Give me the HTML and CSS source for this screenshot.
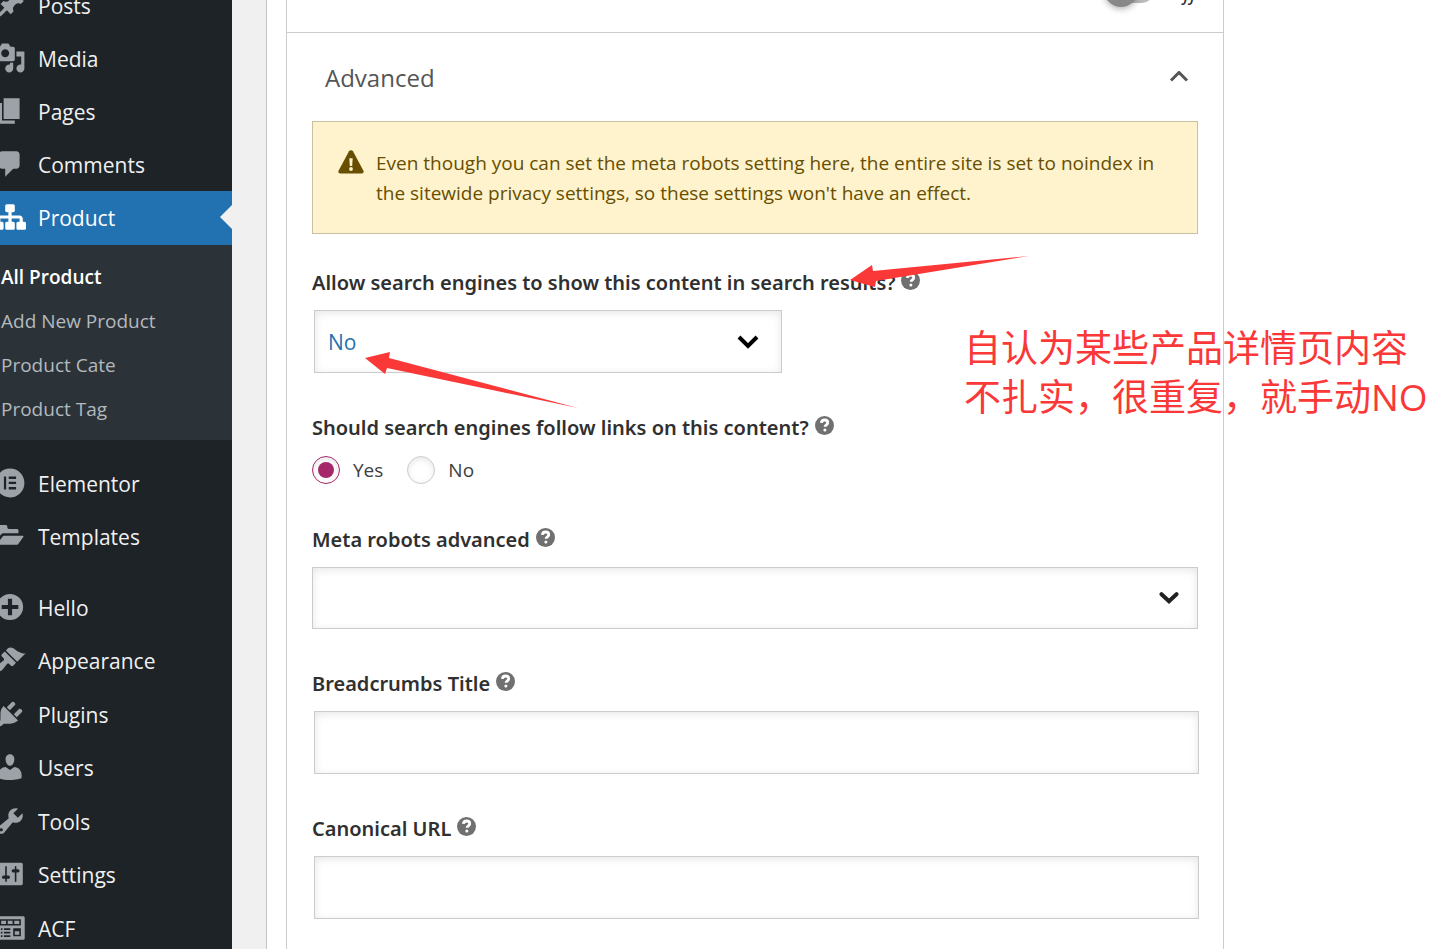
FILE: index.html
```html
<!DOCTYPE html>
<html lang="en">
<head>
  <meta charset="UTF-8" />
  <meta name="viewport" content="width=device-width, initial-scale=1.0" />
  <title>Edit Product</title>
  <link rel="stylesheet" href="styles.css">
</head>
<body>
  <div class="admin">
    <nav class="sidebar">
      <ul class="menu">
        <li><a href="#"><svg class="menu-icon" viewBox="0 0 20 20"><path d="M10.44 3.02l1.82-1.82 6.36 6.35-1.83 1.82c-1.05-.68-2.48-.57-3.41.36l-.75.75c-.92.93-1.04 2.35-.35 3.41l-1.83 1.82-2.41-2.41-2.8 2.79c-.42.42-3.38 2.71-3.8 2.29s1.86-3.39 2.28-3.81l2.79-2.79L4.1 9.36l1.83-1.82c1.05.69 2.48.57 3.4-.36l.75-.75c.93-.92 1.05-2.35.36-3.41z"/></svg>Posts</a></li>
        <li><a href="#"><svg class="menu-icon" viewBox="0 0 20 20"><path d="M13 11V4c0-.55-.45-1-1-1h-1.67L9 1H5L3.67 3H2c-.55 0-1 .45-1 1v7c0 .55.45 1 1 1h10c.55 0 1-.45 1-1zM7 4.5c1.38 0 2.5 1.12 2.5 2.5S8.38 9.5 7 9.5 4.5 8.38 4.5 7 5.62 4.5 7 4.5zM14 6h5v10.5c0 1.38-1.12 2.5-2.5 2.5S14 17.88 14 16.5s1.12-2.5 2.5-2.5c.17 0 .34.02.5.05V9h-3V6zm-4 8.05V13h2v3.5c0 1.38-1.12 2.5-2.5 2.5S7 17.88 7 16.5 8.12 14 9.5 14c.17 0 .34.02.5.05z"/></svg>Media</a></li>
        <li><a href="#"><svg class="menu-icon" viewBox="0 0 20 20"><path d="M6 15V2h10v13H6zm-1 1h8v2H3V5h2v11z"/></svg>Pages</a></li>
        <li><a href="#"><svg class="menu-icon" viewBox="0 0 20 20"><path d="M5 2h9c1.1 0 2 .9 2 2v7c0 1.1-.9 2-2 2h-2l-5 5v-5H5c-1.1 0-2-.9-2-2V4c0-1.1.9-2 2-2z"/></svg>Comments</a></li>
      </ul>

      <a class="current" href="#"><svg class="menu-icon" viewBox="0 0 20 20"><path d="M18 13h1c.55 0 1 .45 1 1.01v2.98c0 .56-.45 1.01-1 1.01h-4c-.55 0-1-.45-1-1.01v-2.98c0-.56.45-1.01 1-1.01h1v-2h-5v2h1c.55 0 1 .45 1 1.01v2.98c0 .56-.45 1.01-1 1.01H8c-.55 0-1-.45-1-1.01v-2.98c0-.56.45-1.01 1-1.01h1v-2H4v2h1c.55 0 1 .45 1 1.01v2.98C6 17.55 5.55 18 5 18H1c-.55 0-1-.45-1-1.01v-2.98C0 13.45.45 13 1 13h1v-2c0-1.1.9-2 2-2h5V7H8c-.55 0-1-.45-1-1.01V3.01C7 2.45 7.45 2 8 2h4c.55 0 1 .45 1 1.01v2.98C13 6.55 12.55 7 12 7h-1v2h5c1.1 0 2 .9 2 2v2z"/></svg>Product</a>
      <ul class="submenu">
        <li><a class="active" href="#">All Product</a></li>
        <li><a href="#">Add New Product</a></li>
        <li><a href="#">Product Cate</a></li>
        <li><a href="#">Product Tag</a></li>
      </ul>

      <ul class="menu group">
        <li><a href="#"><svg class="menu-icon" viewBox="0 0 20 20"><path fill-rule="evenodd" d="M10 1a9 9 0 1 1 0 18 9 9 0 0 1 0-18zM6.2 6v8h1.4V6zM9.2 6v1.5h4.6V6zM9.2 9.2v1.5h4.6V9.2zM9.2 12.5V14h4.6v-1.5z"/></svg>Elementor</a></li>
        <li><a href="#"><svg class="menu-icon" viewBox="0 0 20 20"><path d="M1 4.1c0-.6.4-1 1-1h5.300c.6 0 1 .4 1 1v.5c0 .5.4 1 1 1h5c.6 0 1 .4 1 1v1.700H6.200c-1 0-1.500.3-2.100 1.100L1 13.200zM7 9.900h11c.5 0 .6.3.3.7l-3 4.200c-.4.500-.6.600-1.200.600H1.500L5 10.900c.6-.8 1-1 2-1z"/></svg>Templates</a></li>
      </ul>

      <ul class="menu group">
        <li><a href="#"><svg class="menu-icon" viewBox="0 0 20 20"><path fill-rule="evenodd" d="M10 1.800a8.200 8.200 0 1 1 0 16.400 8.200 8.200 0 0 1 0-16.400zM8.700 4.800v3.900H4.800v2.600h3.900v3.900h2.600v-3.900h3.900V8.700h-3.900V4.800z"/></svg>Hello</a></li>
        <li><a href="#"><svg class="menu-icon" viewBox="0 0 20 20"><path d="M14.48 11.06L7.41 3.99l1.5-1.5c.5-.56 2.3-.47 3.51.32 1.21.8 1.43 1.28 2.91 2.1 1.18.64 2.45 1.26 4.45.85zm-.71.71L6.7 4.7 4.93 6.47c-.39.39-.39 1.02 0 1.41l1.06 1.06c.39.39.39 1.03 0 1.42-.6.6-1.43 1.11-2.21 1.69-.35.26-.7.53-1.01.84C1.43 14.23.4 16.08 1.4 17.07c.99 1 2.84-.03 4.18-1.36.31-.31.58-.66.85-1.02.57-.78 1.08-1.61 1.69-2.21.39-.39 1.02-.39 1.41 0l1.06 1.06c.39.39 1.02.39 1.41 0z"/></svg>Appearance</a></li>
        <li><a href="#"><svg class="menu-icon" viewBox="0 0 20 20"><path d="M13.11 4.36L9.87 7.6 8 5.73l3.24-3.24c.35-.34 1.05-.2 1.56.32.52.51.66 1.21.31 1.55zm-8 1.77l.91-1.12 9.01 9.01-1.19.84c-.71.71-2.63 1.16-3.82 1.16H6.14L4.9 17.26c-.59.59-1.54.59-2.12 0-.59-.58-.59-1.53 0-2.12l1.24-1.24v-3.88c0-1.13.4-3.19 1.09-3.89zm7.26 3.97l3.24-3.24c.34-.35 1.04-.21 1.55.31.52.51.66 1.21.31 1.55l-3.24 3.25z"/></svg>Plugins</a></li>
        <li><a href="#"><svg class="menu-icon" viewBox="0 0 20 20"><path d="M10 9.25c-2.27 0-2.73-3.44-2.73-3.44C7 4.02 7.82 2 9.97 2c2.16 0 2.98 2.02 2.71 3.81 0 0-.41 3.44-2.68 3.44zm0 2.57L12.72 10c2.39 0 4.52 2.33 4.52 4.53v2.49s-3.65 1.13-7.24 1.13c-3.65 0-7.24-1.13-7.24-1.13v-2.49c0-2.25 1.94-4.48 4.47-4.48z"/></svg>Users</a></li>
        <li><a href="#"><svg class="menu-icon" viewBox="0 0 20 20"><path d="M16.68 9.77c-1.34 1.34-3.3 1.67-4.95.99l-5.41 6.52c-.99.99-2.59.99-3.58 0s-.99-2.59 0-3.57l6.52-5.42c-.68-1.65-.35-3.61.99-4.95 1.28-1.28 3.12-1.62 4.72-1.06l-2.89 2.89 2.82 2.82 2.86-2.87c.53 1.58.18 3.39-1.08 4.65zM3.81 16.21c.4.39 1.04.39 1.43 0 .4-.4.4-1.04 0-1.43-.39-.4-1.03-.4-1.43 0-.39.39-.39 1.03 0 1.43z"/></svg>Tools</a></li>
        <li><a href="#"><svg class="menu-icon" viewBox="0 0 20 20"><path d="M18 16V4c0-.55-.45-1-1-1H3c-.55 0-1 .45-1 1v12c0 .55.45 1 1 1h14c.55 0 1-.45 1-1zM8 11h1c.55 0 1 .45 1 1s-.45 1-1 1H8v1.5c0 .28-.22.5-.5.5s-.5-.22-.5-.5V13H6c-.55 0-1-.45-1-1s.45-1 1-1h1V5.5c0-.28.22-.5.5-.5s.5.22.5.5V11zm5-2h-1c-.55 0-1-.45-1-1s.45-1 1-1h1V5.5c0-.28.22-.5.5-.5s.5.22.5.5V7h1c.55 0 1 .45 1 1s-.45 1-1 1h-1v5.5c0 .28-.22.5-.5.5s-.5-.22-.5-.5V9z"/></svg>Settings</a></li>
        <li><a href="#"><svg class="menu-icon" viewBox="0 0 20 20"><path fill-rule="evenodd" d="M1.800 2.600h16.400c.6 0 1 .4 1 1v12.800c0 .6-.4 1-1 1H1.800c-.6 0-1-.4-1-1V3.600c0-.6.4-1 1-1zM3.500 4.500v4h13.300v-4zM4.500 5.500h3v2h-3zM8.600 5.500h3v2h-3zM12.700 5.500h3.100v2h-3.100zM4.300 10.200v1h1v-1zM6.200 10.200v1h4v-1zM4.300 12.400v1h1v-1zM6.200 12.400v1h4v-1zM4.300 14.600v1h1v-1zM6.200 14.600v1h4v-1zM12 10.200v5h4.800v-5zM13 12h2.800v2.200H13z"/></svg>ACF</a></li>
      </ul>
    </nav>

    <main class="content">
      <div class="metabox">
        <section class="panel">
          <div class="toggle-row">
            <label class="toggle"><input type="checkbox"><span class="track"></span>Off</label>
          </div>

          <button class="panel-head" type="button">
            Advanced
            <svg width="20" height="12" viewBox="0 0 20 12"><path d="M2 9.500l8-8 8 8" fill="none" stroke="#555" stroke-width="3"/></svg>
          </button>

          <div class="panel-body">
            <div class="alert">
              <svg class="alert-icon" viewBox="0 0 26 24"><path d="M11 1.300a2.300 2.300 0 0 1 4 0l10.300 19.200c.8 1.500 0 2.900-1.600 2.900H2.300c-1.600 0-2.400-1.400-1.600-2.900z" fill="#674e00"/><path d="M11.300 8.300h3.400l-.5 7.700h-2.400z" fill="#fff3cd"/><circle cx="13" cy="19" r="1.900" fill="#fff3cd"/></svg>
              <p>Even though you can set the meta robots setting here, the entire site is set to noindex in the sitewide privacy settings, so these settings won't have an effect.</p>
            </div>

            <div class="field">
              <div class="field-label">
                <label for="noindex">Allow search engines to show this content in search results?</label>
                <a class="help" href="#" aria-label="Help"><svg viewBox="0 0 20 20"><circle cx="10" cy="10" r="10"/><path d="M6.700 7.300C6.900 5.200 8.300 4.200 10.100 4.200c1.900 0 3.300 1.100 3.300 2.800 0 2.300-2.800 2.300-2.800 4.400"/><circle class="dot" cx="10.400" cy="14.700" r="1.600"/></svg></a>
              </div>
              <div class="select-wrap half">
                <select id="noindex">
                  <option>No</option>
                  <option>Yes</option>
                </select>
                <svg width="22" height="14" viewBox="0 0 22 14"><path d="M2 2l9 9 9-9" fill="none" stroke="#000" stroke-width="4"/></svg>
              </div>
            </div>

            <div class="field">
              <div class="field-label">
                <span id="follow-label">Should search engines follow links on this content?</span>
                <a class="help" href="#" aria-label="Help"><svg viewBox="0 0 20 20"><circle cx="10" cy="10" r="10"/><path d="M6.700 7.300C6.900 5.200 8.300 4.200 10.100 4.200c1.900 0 3.300 1.100 3.300 2.800 0 2.300-2.800 2.300-2.800 4.400"/><circle class="dot" cx="10.400" cy="14.700" r="1.600"/></svg></a>
              </div>
              <div class="radios" role="radiogroup" aria-labelledby="follow-label">
                <label><input type="radio" name="follow" checked>Yes</label>
                <label><input type="radio" name="follow">No</label>
              </div>
            </div>

            <div class="field">
              <div class="field-label">
                <label for="robots">Meta robots advanced</label>
                <a class="help" href="#" aria-label="Help"><svg viewBox="0 0 20 20"><circle cx="10" cy="10" r="10"/><path d="M6.700 7.300C6.900 5.200 8.300 4.200 10.100 4.200c1.900 0 3.300 1.100 3.300 2.800 0 2.300-2.800 2.300-2.800 4.400"/><circle class="dot" cx="10.400" cy="14.700" r="1.600"/></svg></a>
              </div>
              <div class="select-wrap full">
                <select id="robots">
                  <option></option>
                </select>
                <svg width="20" height="12" viewBox="0 0 20 12"><path d="M2.500 2.200l7.500 7 7.500-7" fill="none" stroke="#222" stroke-width="4" stroke-linecap="round"/></svg>
              </div>
            </div>

            <div class="field">
              <div class="field-label">
                <label for="breadcrumbs">Breadcrumbs Title</label>
                <a class="help" href="#" aria-label="Help"><svg viewBox="0 0 20 20"><circle cx="10" cy="10" r="10"/><path d="M6.700 7.300C6.900 5.200 8.300 4.200 10.100 4.200c1.900 0 3.300 1.100 3.300 2.800 0 2.300-2.800 2.300-2.800 4.400"/><circle class="dot" cx="10.400" cy="14.700" r="1.600"/></svg></a>
              </div>
              <div class="input-wrap"><input type="text" id="breadcrumbs"></div>
            </div>

            <div class="field">
              <div class="field-label">
                <label for="canonical">Canonical URL</label>
                <a class="help" href="#" aria-label="Help"><svg viewBox="0 0 20 20"><circle cx="10" cy="10" r="10"/><path d="M6.700 7.300C6.900 5.200 8.300 4.200 10.100 4.200c1.900 0 3.300 1.100 3.300 2.800 0 2.300-2.800 2.300-2.800 4.400"/><circle class="dot" cx="10.400" cy="14.700" r="1.600"/></svg></a>
              </div>
              <div class="input-wrap"><input type="text" id="canonical"></div>
            </div>
          </div>
        </section>
      </div>
    </main>

    <!-- notes drawn over the page -->
    <svg class="arrow arrow-question" viewBox="0 0 182 32"><path d="M1 24L23 9l1 6L180 0 27 25l-1 6z"/></svg>
    <svg class="arrow arrow-value" viewBox="0 0 214 58"><path d="M0 8l25-6-1 6 189 50L22 18l-2 6z"/></svg>
    <p class="note" lang="zh-CN">自认为某些产品详情页内容<br>不扎实，很重复，就手动NO</p>
  </div>
</body>
</html>
```
FILE: styles.css
```css
* {
  box-sizing: border-box;
}
body {
  margin: 0;
  height: 100vh;
  overflow: hidden;
  font-family: "Open Sans", "Noto Sans CJK SC", sans-serif;
  font-size: 19px;
  color: #303030;
  background: #fff;
}
ul {
  list-style: none;
  margin: 0;
  padding: 0;
}
.admin {
  position: relative;
  display: flex;
  height: 100%;
  overflow: hidden;
}

/* sidebar */
.sidebar {
  flex: none;
  width: 232px;
  background: #1d2327;
}
.sidebar a {
  display: flex;
  align-items: center;
  text-decoration: none;
}
.menu:first-child {
  margin-top: -21px;
}
.menu a,
.current {
  height: 53px;
  gap: 12px;
  font-size: 21px;
  color: #f0f0f1;
}
.menu-icon {
  flex: none;
  width: 32px;
  height: 32px;
  margin: 0 0 2px -6px;
  fill: #9ca2a7;
}
.current {
  position: relative;
  height: 54px;
  color: #fff;
  background: #2271b1;
}
.current .menu-icon {
  fill: #fff;
}
.current::after {
  content: "";
  position: absolute;
  right: 0;
  top: 14px;
  border: 12px solid transparent;
  border-left: 0;
  border-right-color: #f0f0f1;
}
.submenu {
  padding: 10px 0 9px;
  background: #2c3338;
}
.submenu a {
  height: 44px;
  padding-left: 1px;
  font-size: 19px;
  color: #b4b9be;
}
.submenu .active {
  color: #fff;
  font-weight: 600;
}
.group {
  margin-top: 17px;
}
.group li:nth-child(even) a {
  height: 54px;
}

/* content */
.content {
  flex: 1;
  min-width: 0;
  padding-left: 34px;
  background: #f0f0f1;
}
.metabox {
  height: 100%;
  padding: 0 222px 0 19px;
  border-left: 1px solid #c3c4c7;
  background: #fff;
}
.panel {
  display: flow-root;
  height: 100%;
  border: 1px solid #ccc;
  border-width: 0 1px;
}
.toggle-row {
  display: flex;
  justify-content: flex-end;
  height: 65px;
  margin-top: -32px;
  padding: 10px 26px 0 0;
  border-bottom: 1px solid #ccc;
}
.toggle {
  display: flex;
  align-items: center;
  gap: 16px;
  height: 28px;
  font-size: 21px;
  font-style: italic;
}
.toggle input {
  position: absolute;
  opacity: 0;
}
.track {
  position: relative;
  width: 48px;
  height: 22px;
  border-radius: 11px;
  background: #bbb;
}
.track::before {
  content: "";
  position: absolute;
  left: -1px;
  top: -8px;
  width: 34px;
  height: 34px;
  border-radius: 50%;
  background: #888;
  box-shadow: 0 2px 6px rgba(0, 0, 0, 0.3);
}
.panel-head {
  display: flex;
  justify-content: space-between;
  align-items: center;
  width: 100%;
  height: 88px;
  padding: 0 34px 0 38px;
  border: none;
  background: none;
  font-family: inherit;
  font-size: 24px;
  color: #555;
}
.panel-body {
  padding: 0 25px;
}
.alert {
  display: flex;
  gap: 12px;
  padding: 26px 25px 25px;
  border: 1px solid #c8c0a0;
  background: #fff3cd;
  color: #674e00;
  line-height: 30px;
}
.alert p {
  margin: 0;
}
.alert-icon {
  flex: none;
  width: 26px;
  height: 24px;
  margin-top: 2px;
}
.field {
  margin-top: 39px;
}
.alert + .field {
  margin-top: 33px;
}
.field-label {
  display: flex;
  align-items: center;
  gap: 6px;
  height: 30px;
  margin-bottom: 13px;
  font-family: "Noto Sans", sans-serif;
  font-size: 20px;
  font-weight: 600;
  white-space: nowrap;
}
.help svg {
  display: block;
  width: 19px;
  height: 19px;
  margin-bottom: 3px;
  fill: #707070;
}
.help path {
  fill: none;
  stroke: #fff;
  stroke-width: 3;
}
.help .dot {
  fill: #fff;
}
select,
input[type="text"] {
  display: block;
  width: 100%;
  height: 63px;
  padding: 0 13px;
  border: 1px solid #ccc;
  border-radius: 0;
  background: #fff;
  box-shadow: inset 0 2px 8px rgba(0, 0, 0, 0.1);
  appearance: none;
  font-family: inherit;
  font-size: 21px;
  color: #2271b1;
}
.select-wrap {
  display: grid;
  align-items: center;
}
.select-wrap > * {
  grid-area: 1 / 1;
}
.select-wrap svg {
  justify-self: end;
  margin-right: 19px;
  pointer-events: none;
}
.half {
  width: 468px;
  margin-left: 2px;
}
.half svg {
  margin-right: 23px;
}
.full select {
  height: 62px;
}
.input-wrap {
  margin: 0 -1px 0 2px;
}
.radios {
  display: flex;
  gap: 24px;
  height: 30px;
  color: #404040;
}
.radios label {
  display: flex;
  align-items: center;
  gap: 13px;
}
.radios input {
  display: grid;
  place-items: center;
  appearance: none;
  width: 28px;
  height: 28px;
  margin: 0;
  border: 1px solid #ccc;
  border-radius: 50%;
  box-shadow: inset 0 2px 6px rgba(0, 0, 0, 0.1);
}
.radios input:checked {
  border-color: #a4286a;
}
.radios input:checked::before {
  content: "";
  width: 16px;
  height: 16px;
  border-radius: 50%;
  background: #a4286a;
}

/* notes */
.note {
  position: absolute;
  left: 964px;
  top: 323px;
  margin: 0;
  font-size: 37px;
  line-height: 49px;
  color: #fb3838;
  white-space: nowrap;
}
.arrow {
  position: absolute;
  fill: #fb3838;
}
.arrow-question {
  left: 849px;
  top: 256px;
  width: 182px;
  height: 32px;
}
.arrow-value {
  left: 365px;
  top: 350px;
  width: 214px;
  height: 58px;
}
```
